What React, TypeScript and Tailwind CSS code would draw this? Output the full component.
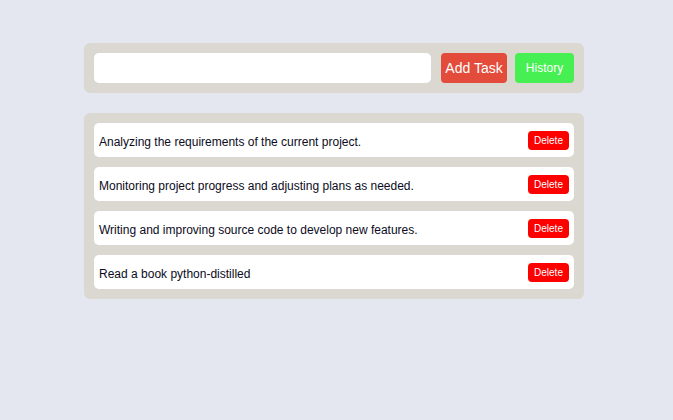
import { useState } from "react";

const initialTasks = [
  "Analyzing the requirements of the current project.",
  "Monitoring project progress and adjusting plans as needed.",
  "Writing and improving source code to develop new features.",
  "Read a book python-distilled",
];

export default function App() {
  const [tasks, setTasks] = useState(initialTasks);
  const [text, setText] = useState("");

  const addTask = () => {
    if (!text.trim()) return;
    setTasks([...tasks, text.trim()]);
    setText("");
  };

  return (
    <div className="min-h-[420px] bg-[#e4e7ef] pt-[43px] font-['Liberation_Sans',Arial,sans-serif]">
      <div className="ml-[84px] w-[500px]">
        <div className="flex items-center rounded-[6px] bg-[#dbd8d2] p-[10px]">
          <input
            type="text"
            value={text}
            onChange={(e) => setText(e.target.value)}
            className="h-[30px] w-[337px] rounded-[5px] bg-white px-2 text-[13px] outline-none"
          />
          <button
            onClick={addTask}
            className="ml-[10px] h-[30px] w-[66px] rounded-[4px] bg-[#e34c3b] text-[14px] font-medium text-white"
          >
            Add Task
          </button>
          <button className="ml-[8px] h-[30px] w-[59px] rounded-[4px] bg-[#46f052] text-[12px] text-white">
            History
          </button>
        </div>

        <div className="mt-[20px] flex flex-col gap-[10px] rounded-[6px] bg-[#dbd8d2] p-[10px]">
          {tasks.map((t, i) => (
            <div
              key={i}
              className="flex h-[34px] items-center justify-between rounded-[5px] bg-white pl-[5px] pr-[5px]"
            >
              <span className="mt-[3px] text-[12px] text-[#0b0b22]">{t}</span>
              <button
                onClick={() => setTasks(tasks.filter((_, j) => j !== i))}
                className="h-[19px] w-[41px] rounded-[4px] bg-[#ff0000] text-[10px] text-white"
              >
                Delete
              </button>
            </div>
          ))}
        </div>
      </div>
    </div>
  );
}
